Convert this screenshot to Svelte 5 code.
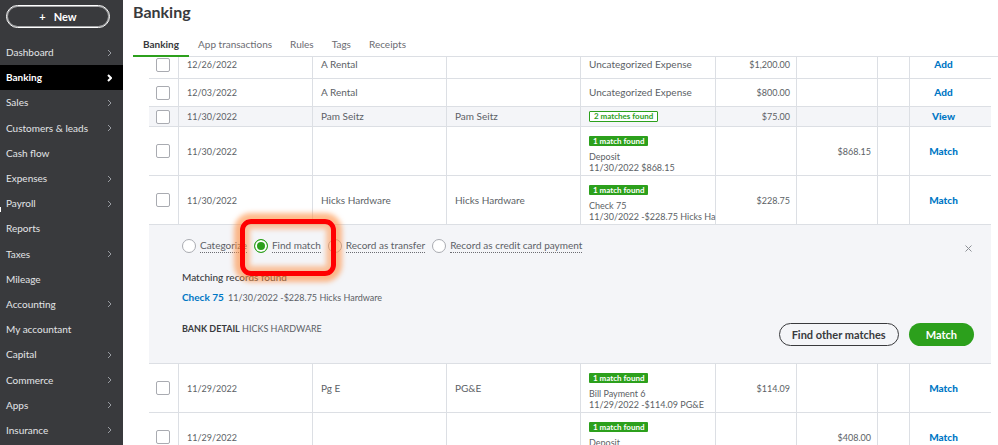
<script lang="ts">
  import { onMount } from 'svelte';

  let scroller: HTMLElement;
  let choice = 'match';

  const nav = [
    { name: 'Dashboard', more: true },
    { name: 'Banking', more: true, active: true },
    { name: 'Sales', more: true },
    { name: 'Customers & leads', more: true },
    { name: 'Cash flow' },
    { name: 'Expenses', more: true },
    { name: 'Payroll', more: true },
    { name: 'Reports' },
    { name: 'Taxes', more: true },
    { name: 'Mileage' },
    { name: 'Accounting', more: true },
    { name: 'My accountant' },
    { name: 'Capital', more: true },
    { name: 'Commerce', more: true },
    { name: 'Apps', more: true },
    { name: 'Insurance', more: true }
  ];

  const tabs = ['Banking', 'App transactions', 'Rules', 'Tags', 'Receipts'];

  const columns = [30, 134, 134, 134, 135, 81, 81, 32, 81];

  const rows = [
    { date: '12/26/2022', desc: 'A Rental', category: 'Uncategorized Expense', spent: '$1,200.00', action: 'Add' },
    { date: '12/03/2022', desc: 'A Rental', category: 'Uncategorized Expense', spent: '$800.00', action: 'Add' },
    { date: '11/30/2022', desc: 'Pam Seitz', payee: 'Pam Seitz', many: '2 matches found', spent: '$75.00', action: 'View' },
    { date: '11/30/2022', match: ['Deposit', '11/30/2022 $868.15'], received: '$868.15', action: 'Match' },
    {
      date: '11/30/2022',
      desc: 'Hicks Hardware',
      payee: 'Hicks Hardware',
      match: ['Check 75', '11/30/2022 -$228.75 Hicks Ha'],
      spent: '$228.75',
      action: 'Match',
      open: true
    },
    {
      date: '11/29/2022',
      desc: 'Pg E',
      payee: 'PG&E',
      match: ['Bill Payment 6', '11/29/2022 -$114.09 PG&E'],
      spent: '$114.09',
      action: 'Match'
    },
    { date: '11/29/2022', match: ['Deposit'], received: '$408.00', action: 'Match' }
  ];

  const options = [
    { id: 'categorize', label: 'Categorize' },
    { id: 'match', label: 'Find match' },
    { id: 'transfer', label: 'Record as transfer' },
    { id: 'payment', label: 'Record as credit card payment' }
  ];

  onMount(() => {
    scroller.scrollTop = 6;
  });
</script>

<div class="app">
  <aside>
    <button class="new"><span>+</span>New</button>
    <nav>
      {#each nav as item}
        <a href="#{item.name}" class:active={item.active}>
          {item.name}
          {#if item.more}
            <svg width="5" height="8" viewBox="0 0 5 8"><path d="M1 1l3 3-3 3" /></svg>
          {/if}
        </a>
      {/each}
    </nav>
    <span class="marker"></span>
  </aside>

  <main>
    <header>
      <h1>Banking</h1>
      <div class="tabs">
        {#each tabs as tab, i}
          <a href="#{tab}" class:current={i === 0}>{tab}</a>
        {/each}
      </div>
    </header>

    <div class="scroller" bind:this={scroller}>
      <table>
        <colgroup>
          {#each columns as width}
            <col style="width: {width}px" />
          {/each}
        </colgroup>
        <tbody>
          {#each rows as row}
            <tr class:short={row.many} class:tall={row.match}>
              <td class="check"><input type="checkbox" aria-label="Select {row.date}" /></td>
              <td class="date">{row.date}</td>
              <td>{row.desc ?? ''}</td>
              <td>{row.payee ?? ''}</td>
              <td class:found={row.match}>
                {#if row.match}
                  <span class="badge">1 match found</span>
                  {#each row.match as line}
                    <div>{line}</div>
                  {/each}
                {:else if row.many}
                  <span class="badge outline">{row.many}</span>
                {:else}
                  {row.category}
                {/if}
              </td>
              <td class="amount">{row.spent ?? ''}</td>
              <td class="amount">{row.received ?? ''}</td>
              <td></td>
              <td class="action"><button>{row.action}</button></td>
            </tr>
            {#if row.open}
              <tr class="detail">
                <td colspan="9">
                  <div class="panel">
                    <div class="options">
                      {#each options as option}
                        <label>
                          <input type="radio" name="choice" value={option.id} bind:group={choice} />
                          <span>{option.label}</span>
                        </label>
                      {/each}
                      <button class="close" aria-label="Close">
                        <svg width="7" height="7" viewBox="0 0 7 7"><path d="M.5.5l6 6M6.5.5l-6 6" /></svg>
                      </button>
                    </div>
                    <h2>Matching records found</h2>
                    <p class="record"><a href="#check">Check 75</a> 11/30/2022 -$228.75 Hicks Hardware</p>
                    <div class="bottom">
                      <p><b>BANK DETAIL</b> HICKS HARDWARE</p>
                      <div class="buttons">
                        <button class="other">Find other matches</button>
                        <button class="match">Match</button>
                      </div>
                    </div>
                    <span class="highlight"></span>
                  </div>
                </td>
              </tr>
            {/if}
          {/each}
        </tbody>
      </table>
    </div>
  </main>
</div>

<style>
  .app {
    display: flex;
    height: 100vh;
    overflow: hidden;
    background: #fff;
    color: #5c5f66;
    font-family: Lato, 'Liberation Sans', sans-serif;
    font-size: 10px;
    line-height: 11px;
  }

  button {
    padding: 0;
    border: 0;
    background: none;
    color: inherit;
    font: inherit;
    cursor: pointer;
  }

  a {
    color: inherit;
    text-decoration: none;
  }

  h1,
  h2,
  p {
    margin: 0;
  }

  svg {
    fill: none;
    stroke: currentColor;
  }

  aside {
    position: relative;
    display: flex;
    flex: 0 0 123px;
    flex-direction: column;
    box-sizing: border-box;
    padding: 5px 0 2px;
    background: #393a3d;
    color: #e3e5e8;
  }

  .new {
    display: flex;
    flex: none;
    align-items: center;
    justify-content: center;
    gap: 8px;
    height: 23px;
    margin: 0 13px 12px 6px;
    border: 1px solid #fff;
    border-radius: 12px;
    box-shadow: inset 0 0 0 1px #a5a6a8;
    color: #fff;
    font-size: 11px;
    font-weight: 700;
  }

  nav {
    display: flex;
    flex: 1;
    flex-direction: column;
  }

  nav a {
    display: flex;
    flex: 1 1 25px;
    align-items: center;
    justify-content: space-between;
    max-height: 26px;
    padding: 0 11px 0 6px;
  }

  nav svg {
    color: #9a9da3;
  }

  nav .active {
    background: #000;
    color: #fff;
    font-weight: 700;
  }

  nav .active svg {
    color: #fff;
    stroke-width: 2;
  }

  .marker {
    position: absolute;
    top: 207px;
    left: 0;
    width: 1px;
    height: 5px;
    background: #fff;
  }

  main {
    display: flex;
    flex: 1;
    flex-direction: column;
    min-width: 0;
  }

  header {
    margin-left: 10px;
    border-bottom: 1px solid #dcdfe4;
  }

  h1 {
    padding-top: 2px;
    color: #393a3d;
    font-size: 16px;
    line-height: 20px;
  }

  .tabs {
    display: flex;
    height: 22px;
    margin-top: 13px;
    margin-bottom: -1px;
  }

  .tabs a {
    padding: 4px 9px 0;
    color: #6b6c72;
  }

  .tabs .current {
    padding: 4px 10px 0;
    border-bottom: 2px solid #2ca01c;
    color: #393a3d;
    font-weight: 700;
  }

  .scroller {
    flex: 1;
    margin: 0 7px 0 26px;
    overflow-y: auto;
    scrollbar-width: none;
  }

  table {
    width: 100%;
    border-spacing: 0;
    table-layout: fixed;
  }

  td {
    box-sizing: border-box;
    height: 28px;
    padding: 0 0 0 8px;
    border-right: 1px solid #dcdfe4;
    border-bottom: 1px solid #dcdfe4;
    white-space: nowrap;
  }

  td:last-child {
    border-right: 0;
  }

  .short td {
    height: 20px;
    background: #f4f5f8;
  }

  .tall td {
    height: 49px;
  }

  .date,
  .amount,
  .found {
    font-size: 9px;
  }

  td.found {
    padding-top: 9px;
    vertical-align: top;
  }

  td.check {
    padding: 0 0 0 7px;
  }

  input {
    display: block;
    appearance: none;
    box-sizing: border-box;
    flex: none;
    width: 14px;
    height: 14px;
    margin: 0;
    border: 1px solid #a9abb1;
    border-radius: 2px;
    background: #fff;
  }

  td.amount {
    padding: 0 6px 0 0;
    text-align: right;
  }

  td.action {
    padding: 0 14px 0 0;
    text-align: center;
  }

  .action button {
    color: #0077c5;
    font-weight: 900;
  }

  .badge {
    display: block;
    box-sizing: border-box;
    width: fit-content;
    height: 10px;
    margin-bottom: 5px;
    padding: 0 4px;
    border-radius: 1px;
    background: #2ca01c;
    color: #fff;
    font-size: 8px;
    font-weight: 700;
    line-height: 10px;
  }

  .outline {
    height: 11px;
    margin: 0;
    border: 1px solid #2ca01c;
    background: #fff;
    color: #2ca01c;
    line-height: 9px;
  }

  .detail td {
    padding: 0;
    background: #f4f5f8;
  }

  .panel {
    position: relative;
    padding: 13px 17px 17px 33px;
  }

  .options {
    display: flex;
    align-items: flex-start;
    gap: 7px;
  }

  label {
    display: flex;
    align-items: center;
    gap: 4px;
  }

  label span {
    padding: 2px 0 1px;
    border-bottom: 1px dotted #6b6c72;
  }

  input[type='radio'] {
    border-radius: 50%;
  }

  input[type='radio']:checked {
    border-color: #2ca01c;
    background: #2ca01c;
    box-shadow: inset 0 0 0 2px #fff;
  }

  .close {
    display: flex;
    margin: 7px 2px 0 auto;
    color: #8d9096;
  }

  h2 {
    margin-top: 19px;
    color: #393a3d;
    font-size: 10px;
    font-weight: 500;
  }

  .record {
    margin-top: 9px;
    font-size: 9px;
  }

  .record a {
    margin-right: 2px;
    color: #0077c5;
    font-size: 10px;
    font-weight: 700;
  }

  .bottom {
    display: flex;
    align-items: flex-start;
    justify-content: space-between;
    margin-top: 20px;
    font-size: 9px;
  }

  b {
    color: #393a3d;
    font-weight: 700;
  }

  .buttons {
    display: flex;
    gap: 10px;
  }

  .buttons button {
    height: 23px;
    padding: 0 17px;
    border-radius: 12px;
    font-size: 11px;
    font-weight: 700;
  }

  .buttons .other {
    padding: 0 12px;
    border: 1px solid #393a3d;
    color: #393a3d;
  }

  .buttons .match {
    background: #2ca01c;
    color: #fff;
  }

  .highlight {
    position: absolute;
    top: -6px;
    left: 91px;
    box-sizing: border-box;
    width: 96px;
    height: 57px;
    border: 5px solid #f00;
    border-radius: 11px;
    box-shadow:
      0 0 5px 6px rgba(255, 140, 60, 0.6),
      inset 0 0 5px 5px rgba(255, 140, 60, 0.5);
    pointer-events: none;
  }
</style>
